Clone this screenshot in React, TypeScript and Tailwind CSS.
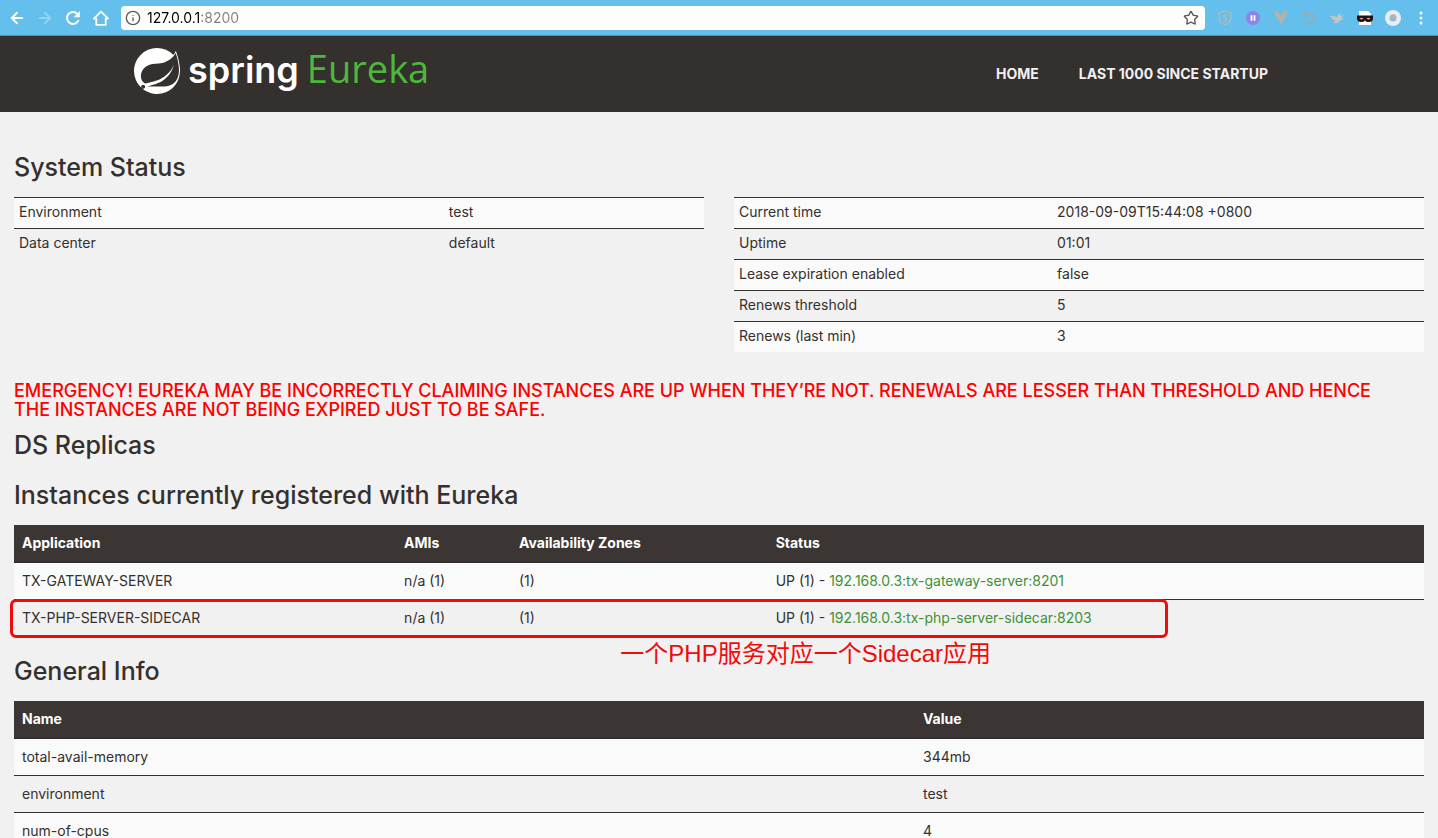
import type { ReactNode } from 'react';
import { ArrowLeft, ArrowRight, Info, Star } from 'lucide-react';
import { SiSpring } from 'react-icons/si';

const systemInfo = [
  ['Environment', 'test'],
  ['Data center', 'default'],
];

const runtimeInfo = [
  ['Current time', '2018-09-09T15:44:08 +0800'],
  ['Uptime', '01:01'],
  ['Lease expiration enabled', 'false'],
  ['Renews threshold', '5'],
  ['Renews (last min)', '3'],
];

const instances = [
  { name: 'TX-GATEWAY-SERVER', id: '192.168.0.3:tx-gateway-server:8201' },
  { name: 'TX-PHP-SERVER-SIDECAR', id: '192.168.0.3:tx-php-server-sidecar:8203' },
];

const generalInfo = [
  ['total-avail-memory', '344mb'],
  ['environment', 'test'],
  ['num-of-cpus', '4'],
];

const ToolButton = ({ label, children }: { label: string; children: ReactNode }) => (
  <button aria-label={label} className="flex size-4 items-center justify-center">
    {children}
  </button>
);

const BrowserBar = () => (
  <div className="flex h-9 shrink-0 items-center gap-3 border-b border-[#4a90b0] bg-[#64bfec] px-[9px] text-white">
    <ToolButton label="Back">
      <ArrowLeft size={18} strokeWidth={2.4} className="shrink-0" />
    </ToolButton>
    <ToolButton label="Forward">
      <ArrowRight size={18} strokeWidth={2.4} className="shrink-0 opacity-30" />
    </ToolButton>
    <ToolButton label="Reload">
      <svg viewBox="0 0 16 16" className="size-4 shrink-0" fill="none" stroke="currentColor" strokeWidth="2">
        <path d="M13.6 10A6 6 0 1 1 12.4 3.900" />
        <path d="M14.800 1v6.200H8.600z" fill="currentColor" stroke="none" />
      </svg>
    </ToolButton>
    <ToolButton label="Home">
      <svg viewBox="0 0 16 16" className="size-4 shrink-0" fill="none" stroke="currentColor" strokeWidth="1.8">
        <path d="M8 1.6.9 8.6h2.4v6.2h9.4V8.6h2.4z" strokeLinejoin="round" />
      </svg>
    </ToolButton>
    <div className="flex h-6 flex-1 items-center gap-1.5 rounded-sm bg-white pr-1.5 pl-1">
      <Info size={16} className="rotate-0 text-[#5a5a5a]" />
      {/* host is black, port is grey */}
      <input
        aria-label="Address"
        defaultValue="127.0.0.1:8200"
        className="h-6 flex-1 bg-linear-to-r from-black from-[54px] to-[#808080] to-[54px] bg-clip-text text-sm leading-6 text-transparent caret-black outline-none"
      />
      <ToolButton label="Bookmark">
        <Star size={16} className="shrink-0 text-[#555]" />
      </ToolButton>
    </div>
    <Extensions />
  </div>
);

const Extensions = () => (
  <div className="flex items-center gap-3">
    <ToolButton label="Shield">
      <svg viewBox="0 0 16 16" className="size-4" fill="none" stroke="#a3bdc0" strokeWidth="1.5">
        <path d="M8 1 14 2.8v5c0 3.3-2.600 5.600-6 7.200-3.400-1.600-6-3.900-6-7.200v-5z" />
        <path d="M10 5.500C9 4.500 6.500 4.500 6.500 6.200S9.800 7.700 9.800 9.500 7 11.500 6 10.300" />
      </svg>
    </ToolButton>
    <ToolButton label="Pause">
      <svg viewBox="0 0 16 16" className="size-4">
        <circle cx="8" cy="8" r="7" fill="#8f83e8" />
        <path d="M6.500 5.200v5.600M9.500 5.200v5.600" stroke="#fff" strokeWidth="1.800" />
      </svg>
    </ToolButton>
    <ToolButton label="Vue devtools">
      <svg viewBox="0 0 16 16" className="size-4">
        <path d="M.8 1.500h4.200L8 7l3-5.500h4.200L8 14.500z" fill="#bdb0a2" />
        <path d="M5 1.500h2L8 3.500l1-2h2L8 7z" fill="#8fb3c4" />
      </svg>
    </ToolButton>
    <ToolButton label="Undo">
      <svg viewBox="0 0 16 16" className="size-4" fill="none" stroke="#93abb5" strokeWidth="2">
        <path d="M2.500 4H9a4.500 4.500 0 0 1 0 9H4" />
        <path d="M5.500 1 2.500 4l3 3" />
      </svg>
    </ToolButton>
    <ToolButton label="Bird">
      <svg viewBox="0 0 16 16" className="size-4">
        <path d="M1 6c3-.5 5 0 6.500 1.500L12 2l-1 4 4-1-3 3 3 1-4 1.500c-1.500 3-4.500 3.500-7 2l3-1.500C4.500 10.500 2.500 8.500 1 6z" fill="#c3c6c2" />
      </svg>
    </ToolButton>
    <ToolButton label="Mask">
      <svg viewBox="0 0 16 16" className="size-4">
        <path d="M2 1h9l3 3v11H2z" fill="#fff" />
        <path d="M0 5.500h16v3c0 2.500-1.500 3.500-4 3.500-2 0-3-.6-4-1.600-1 1-2 1.600-4 1.600-2.500 0-4-1-4-3.500z" fill="#1c1514" />
        <path d="M2.500 8.700q2-1.800 4 0-2 1.600-4 0M9.500 8.700q2-1.800 4 0-2 1.600-4 0" fill="#e9a08e" />
      </svg>
    </ToolButton>
    <ToolButton label="Profile">
      <svg viewBox="0 0 16 16" className="size-4">
        <circle cx="8" cy="8" r="8" fill="#e9edf0" />
        <circle cx="8" cy="8" r="3.500" fill="#8fbcd4" />
        <path d="M6.500 4.700a3.500 3.500 0 0 1 5 3.300H8z" fill="#d4a99c" />
      </svg>
    </ToolButton>
    <ToolButton label="Menu">
      <svg viewBox="0 0 16 16" className="size-4" fill="#fff">
        <circle cx="8" cy="3" r="1.500" />
        <circle cx="8" cy="8" r="1.500" />
        <circle cx="8" cy="13" r="1.500" />
      </svg>
    </ToolButton>
  </div>
);

const Header = () => (
  <header className="h-19 shrink-0 bg-[#34302d]">
    <div className="mx-auto flex w-full max-w-[1170px] items-start justify-between">
      <a href="#" className="flex items-start gap-2 pt-3">
        <SiSpring size={46} color="#fff" />
        <span className="flex items-baseline gap-2">
          <span className="text-4xl leading-10 font-semibold text-white">spring</span>
          <span className="font-['Open_Sans'] text-[38px] leading-10 text-[#4cb93c]">Eureka</span>
        </span>
      </a>
      <nav className="flex gap-10 pt-7 pr-9 text-sm leading-5 font-bold text-[#f1f1f1]">
        <a href="#">HOME</a>
        <a href="#">LAST 1000 SINCE STARTUP</a>
      </nav>
    </div>
  </header>
);

const Title = ({ children }: { children: ReactNode }) => (
  <h1 className="text-[25px] leading-7 font-medium">{children}</h1>
);

const InfoTable = ({ rows, firstCol }: { rows: string[][]; firstCol: string }) => (
  <table className="w-full table-fixed text-left">
    <tbody>
      {rows.map(([name, value]) => (
        <tr key={name} className="border-t border-[#34302d] odd:bg-[#fafafa]">
          <td className={`px-[5px] pt-1 pb-1.5 ${firstCol}`}>{name}</td>
          <td className="px-[5px] pt-1 pb-1.5">{value}</td>
        </tr>
      ))}
    </tbody>
  </table>
);

const thead = 'border-b-2 border-[#34302d] bg-[#3b3633] text-white';
const th = 'p-2 font-bold';

function App() {
  return (
    <div className="flex h-screen flex-col overflow-hidden bg-[#f1f1f1] font-[Inter,sans-serif] text-sm leading-5 text-[#34302d]">
      <BrowserBar />
      <Header />
      <main className="px-[14px] pt-[41px]">
        <Title>System Status</Title>
        <div className="mt-4 grid grid-cols-2 items-start gap-[30px]">
          <InfoTable rows={systemInfo} firstCol="w-[62.3%]" />
          <InfoTable rows={runtimeInfo} firstCol="w-[46.1%]" />
        </div>

        <h4 className="mt-[29px] pr-6 text-lg leading-[19px] font-medium text-[#ff0000]">
          EMERGENCY! EUREKA MAY BE INCORRECTLY CLAIMING INSTANCES ARE UP WHEN THEY’RE NOT. RENEWALS ARE LESSER THAN
          THRESHOLD AND HENCE THE INSTANCES ARE NOT BEING EXPIRED JUST TO BE SAFE.
        </h4>

        <div className="mt-3">
          <Title>DS Replicas</Title>
        </div>
        <div className="mt-[22px]">
          <Title>Instances currently registered with Eureka</Title>
        </div>

        <div className="relative mt-4">
          <table className="w-full table-fixed text-left">
            <thead className={thead}>
              <tr>
                <th className={`w-[27.1%] ${th}`}>Application</th>
                <th className={`w-[8.15%] ${th}`}>AMIs</th>
                <th className={`w-[18.2%] ${th}`}>Availability Zones</th>
                <th className={th}>Status</th>
              </tr>
            </thead>
            <tbody>
              {instances.map(({ name, id }) => (
                <tr key={name} className="border-t border-[#34302d] odd:bg-[#fafafa]">
                  <td className="p-2">{name}</td>
                  <td className="p-2">n/a (1)</td>
                  <td className="p-2">(1)</td>
                  <td className="p-2">
                    UP (1) - <a href="#" className="text-[#3f9137]">{id}</a>
                  </td>
                </tr>
              ))}
            </tbody>
          </table>
          <div className="pointer-events-none absolute -bottom-0.5 -left-1 h-[39px] w-[82.1%] rounded-md border-3 border-[#f00a0a]" />
          <p className="absolute top-full left-[43%] pt-0.5 font-['Liberation_Sans','Noto_Sans_CJK_SC',sans-serif] text-2xl leading-8 whitespace-nowrap text-[#f00a0a]">
            一个PHP服务对应一个Sidecar应用
          </p>
        </div>

        <div className="mt-[21px]">
          <Title>General Info</Title>
        </div>
        <table className="mt-4 w-full table-fixed text-left">
          <thead className={thead}>
            <tr>
              <th className={`w-[63.9%] ${th}`}>Name</th>
              <th className={th}>Value</th>
            </tr>
          </thead>
          <tbody>
            {generalInfo.map(([name, value]) => (
              <tr key={name} className="border-t border-[#34302d] odd:bg-[#fafafa]">
                <td className="p-2">{name}</td>
                <td className="p-2">{value}</td>
              </tr>
            ))}
          </tbody>
        </table>
      </main>
    </div>
  );
}

export default App;
